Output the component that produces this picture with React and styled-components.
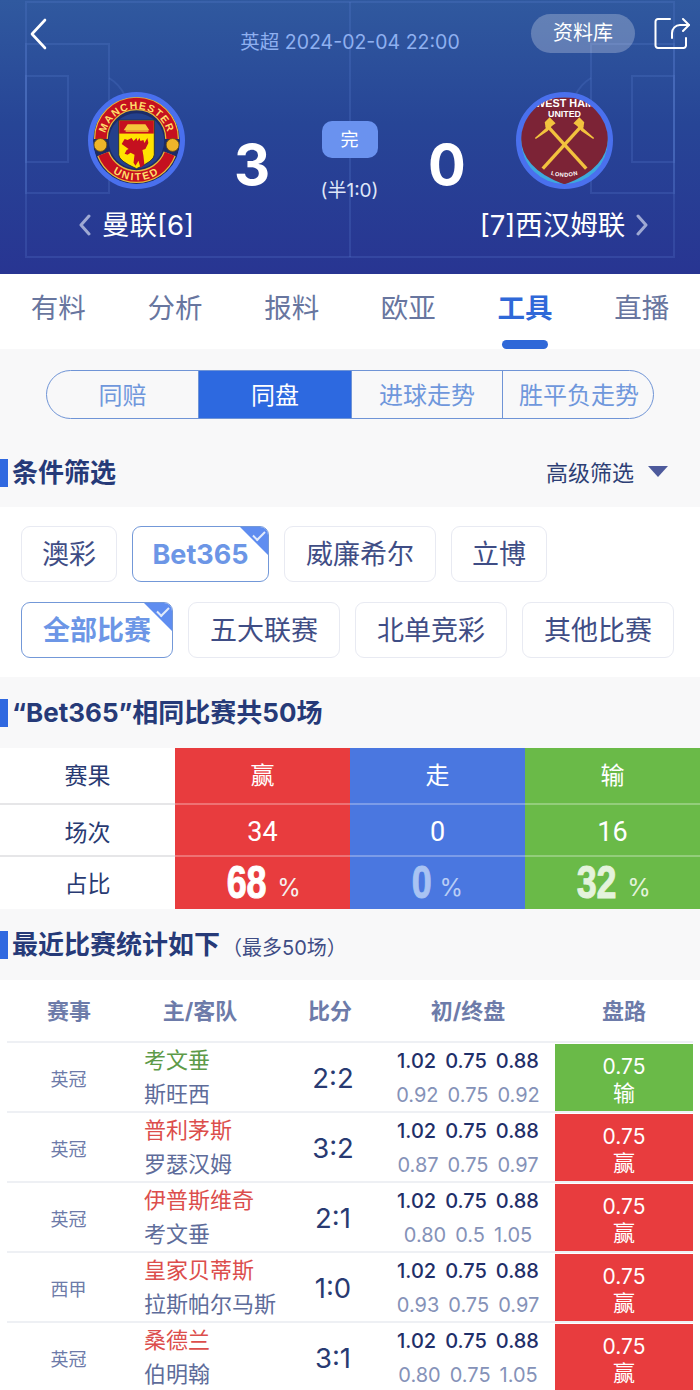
import styled, { createGlobalStyle } from "styled-components";

const rows = [
  { league: "英冠", home: "考文垂", away: "斯旺西", score: "2:2", end: ["0.92", "0.75", "0.92"], res: "输" },
  { league: "英冠", home: "普利茅斯", away: "罗瑟汉姆", score: "3:2", end: ["0.87", "0.75", "0.97"], res: "赢" },
  { league: "英冠", home: "伊普斯维奇", away: "考文垂", score: "2:1", end: ["0.80", "0.5", "1.05"], res: "赢" },
  { league: "西甲", home: "皇家贝蒂斯", away: "拉斯帕尔马斯", score: "1:0", end: ["0.93", "0.75", "0.97"], res: "赢" },
  { league: "英冠", home: "桑德兰", away: "伯明翰", score: "3:1", end: ["0.80", "0.75", "1.05"], res: "赢" },
];

const tabs = ["有料", "分析", "报料", "欧亚", "工具", "直播"];
const segs = [
  { label: "同赔", w: 151 },
  { label: "同盘", w: 153 },
  { label: "进球走势", w: 151 },
  { label: "胜平负走势", w: 153 },
];

function ManUtdCrest() {
  return (
    <svg width="88" height="88" viewBox="0 0 88 88">
      <circle cx="44" cy="44" r="44" fill="#1d2c66" />
      <circle cx="44" cy="44" r="28" fill="#24408c" />
      <path d="M8 42a36 36 0 0 1 72 0" fill="none" stroke="#e7b93a" strokeWidth="14" />
      <path d="M8 42a36 36 0 0 1 72 0" fill="none" stroke="#c5101f" strokeWidth="11.500" />
      <path d="M10.400 57a36 36 0 0 0 67.200 0" fill="none" stroke="#e7b93a" strokeWidth="13" />
      <path d="M10.400 57a36 36 0 0 0 67.200 0" fill="none" stroke="#c5101f" strokeWidth="10.500" />
      <defs>
        <path id="muTopText" d="M11.500 44a32.500 32.500 0 0 1 65 0" />
        <path id="muBottomText" d="M6.600 58a40 40 0 0 0 74.800 0" />
      </defs>
      <BadgeText fontSize="10.500" fontWeight="700" fill="#ffdf6b" letterSpacing="1.200">
        <textPath href="#muTopText" startOffset="50%" textAnchor="middle">MANCHESTER</textPath>
      </BadgeText>
      <BadgeText fontSize="10.500" fontWeight="700" fill="#ffdf6b" letterSpacing="2">
        <textPath href="#muBottomText" startOffset="50%" textAnchor="middle">UNITED</textPath>
      </BadgeText>
      <circle cx="7.500" cy="48" r="6.500" fill="#eeb52a" stroke="#6b4d0a" strokeWidth="0.800" />
      <circle cx="80.500" cy="48" r="6.500" fill="#eeb52a" stroke="#6b4d0a" strokeWidth="0.800" />
      <path d="M26 23H62V58Q62 64 44 72Q26 64 26 58Z" fill="#ffe300" stroke="#20202a" strokeWidth="0.800" />
      <rect x="26.500" y="23.500" width="35" height="13" fill="#c5101f" />
      <path d="M31 33l4-6h18l4 6z" fill="#f5c83a" />
      <path d="M33 34h23" stroke="#f5c83a" strokeWidth="1.500" />
      <path d="M29 47l3-5 3 1 4-2 2 3 3-3 1 3 2-3 1 3 3-1 1 3 3-5 1 5-3 6-3 1 1 6 1 9-4 3-2-7-3 5-2-3 1-8-4-2-3 2-3-1 2-4 2-1z" fill="#c5101f" />
    </svg>
  );
}

function WestHamCrest() {
  return (
    <svg width="88" height="88" viewBox="0 0 88 88">
      <circle cx="44" cy="44" r="44" fill="#3ea9dc" />
      <path d="M0 0H88V40Q88 72 44 88Q0 72 0 40Z" fill="#7c2336" />
      <g stroke="#f2c23e" strokeWidth="3.400">
        <path d="M22 72 62 28" />
        <path d="M66 72 26 28" />
      </g>
      <path d="M14 41 25 31l-1-6 5-5 6 6-4 3-4 5-12 8z" fill="#f2c23e" />
      <path d="M74 41 63 31l1-6-5-5-6 6 4 3 4 5 12 8z" fill="#f2c23e" />
      <defs>
        <path id="whLondon" d="M22 75Q44 85 66 75" />
      </defs>
      <BadgeText x="44" y="9.500" fontSize="11" fontWeight="700" fill="#fff" textAnchor="middle">WEST HAM</BadgeText>
      <BadgeText x="44" y="20" fontSize="9" fontWeight="700" fill="#fff" textAnchor="middle">UNITED</BadgeText>
      <BadgeText fontSize="5.800" fontWeight="700" fill="#fff" letterSpacing="0.500">
        <textPath href="#whLondon" startOffset="50%" textAnchor="middle">LONDON</textPath>
      </BadgeText>
    </svg>
  );
}

export default function App() {
  return (
    <Page>
      <GlobalStyle />
      <Header>
        <Pitch viewBox="0 0 700 274" fill="none" stroke="#5f86d6" strokeOpacity="0.22" strokeWidth="2">
          <rect x="26" y="2" width="648" height="255" />
          <line x1="350" y1="2" x2="350" y2="257" />
          <rect x="26" y="44" width="83" height="149" />
          <rect x="26" y="76" width="42" height="86" />
          <path d="M109 78a40 40 0 0 1 16 18" />
          <rect x="591" y="44" width="83" height="149" />
          <rect x="632" y="76" width="42" height="86" />
          <path d="M591 78a40 40 0 0 0 -16 18" />
        </Pitch>
        <TopBar>
          <IconButton>
            <svg width="18" height="32" viewBox="0 0 18 32" fill="none" stroke="#fff" strokeWidth="2.600" strokeLinecap="round" strokeLinejoin="round">
              <path d="M15 2 2 16l13 14" />
            </svg>
          </IconButton>
          <MatchInfo>英超 2024-02-04 22:00</MatchInfo>
          <TopRight>
            <DataButton>资料库</DataButton>
            <svg width="36" height="34" viewBox="0 0 36 34" fill="none" stroke="#fff" strokeWidth="2" strokeLinecap="round" strokeLinejoin="round">
              <path d="M16 2H4A2.500 2.500 0 0 0 1.500 4.500v24A2.500 2.500 0 0 0 4 31h25.500A2.500 2.500 0 0 0 32 28.500V21" />
              <path d="M18 21v-5a8 8 0 0 1 8-8h9" />
              <path d="M29 2l6 6-6 6" />
            </svg>
          </TopRight>
        </TopBar>
        <ScoreRow>
          <Team>
            <Badge><ManUtdCrest /></Badge>
            <TeamName>
              <Arrow viewBox="0 0 14 22"><path d="M11 2 3 11l8 9" /></Arrow>
              曼联[6]
            </TeamName>
          </Team>
          <Score>3</Score>
          <Status>
            <StatusPill>完</StatusPill>
            <HalfScore>(半1:0)</HalfScore>
          </Status>
          <Score>0</Score>
          <Team $away>
            <Badge><WestHamCrest /></Badge>
            <TeamName>
              [7]西汉姆联
              <Arrow viewBox="0 0 14 22"><path d="M3 2l8 9-8 9" /></Arrow>
            </TeamName>
          </Team>
        </ScoreRow>
      </Header>

      <TabBar>
        {tabs.map((t) => (
          <Tab key={t} $active={t === "工具"}>{t}</Tab>
        ))}
      </TabBar>

      <SegmentWrap>
        <Segments>
          {segs.map((s) => (
            <Segment key={s.label} $active={s.label === "同盘"} $w={s.w}>{s.label}</Segment>
          ))}
        </Segments>
      </SegmentWrap>

      <FilterHead>
        <SectionTitle>条件筛选</SectionTitle>
        <Advanced>高级筛选<Caret /></Advanced>
      </FilterHead>

      <Filters>
        <ChipRow>
          <Chip $w={96}>澳彩</Chip>
          <Chip $w={137} $active>Bet365<Check /></Chip>
          <Chip $w={152}>威廉希尔</Chip>
          <Chip $w={96}>立博</Chip>
        </ChipRow>
        <ChipRow>
          <Chip $w={152} $active>全部比赛<Check /></Chip>
          <Chip $w={152}>五大联赛</Chip>
          <Chip $w={152}>北单竞彩</Chip>
          <Chip $w={152}>其他比赛</Chip>
        </ChipRow>
      </Filters>

      <SameHead>
        <SectionTitle>“Bet365”相同比赛共50场</SectionTitle>
      </SameHead>

      <Summary>
        <SummaryRow $pb={4}>
          <SummaryLabel>赛果</SummaryLabel>
          <SummaryCell $c="#e83c3e">赢</SummaryCell>
          <SummaryCell $c="#4a77e0">走</SummaryCell>
          <SummaryCell $c="#6aba48">输</SummaryCell>
        </SummaryRow>
        <SummaryRow $h={52} $line $pt={3}>
          <SummaryLabel>场次</SummaryLabel>
          <SummaryCell $c="#e83c3e"><Count>34</Count></SummaryCell>
          <SummaryCell $c="#4a77e0"><Count>0</Count></SummaryCell>
          <SummaryCell $c="#6aba48"><Count>16</Count></SummaryCell>
        </SummaryRow>
        <SummaryRow $h={54} $line>
          <SummaryLabel>占比</SummaryLabel>
          <SummaryCell $c="#e83c3e"><Percent>68</Percent><PercentSign>%</PercentSign></SummaryCell>
          <SummaryCell $c="#4a77e0"><Percent $tint="#a9c3f3">0</Percent><PercentSign $tint="#b9cdf5">%</PercentSign></SummaryCell>
          <SummaryCell $c="#6aba48"><Percent $tint="#e4f3dc">32</Percent><PercentSign $tint="#e4f3dc">%</PercentSign></SummaryCell>
        </SummaryRow>
      </Summary>

      <RecentHead>
        <SectionTitle>最近比赛统计如下</SectionTitle>
        <TitleNote>（最多50场）</TitleNote>
      </RecentHead>

      <Table>
        <HeadRow>
          <LeagueCol>赛事</LeagueCol>
          <TeamsHead>主/客队</TeamsHead>
          <ScoreHead>比分</ScoreHead>
          <OddsHead>初/终盘</OddsHead>
          <RoadHead>盘路</RoadHead>
        </HeadRow>
        {rows.map((r) => (
          <Row key={r.home}>
            <LeagueCell>{r.league}</LeagueCell>
            <TeamsCell>
              <HomeName $win={r.res === "赢"}>{r.home}</HomeName>
              <AwayName>{r.away}</AwayName>
            </TeamsCell>
            <ScoreCell>{r.score}</ScoreCell>
            <OddsCell>
              <OddsLine $start>
                <span>1.02</span><span>0.75</span><span>0.88</span>
              </OddsLine>
              <OddsLine>
                {r.end.map((v, i) => <span key={i}>{v}</span>)}
              </OddsLine>
            </OddsCell>
            <RoadCell $win={r.res === "赢"}>
              <span>0.75</span>
              <RoadResult>{r.res}</RoadResult>
            </RoadCell>
          </Row>
        ))}
      </Table>
    </Page>
  );
}

const LATIN = `Inter, "Noto Sans CJK SC", sans-serif`;

const GlobalStyle = createGlobalStyle`
  html, body {
    margin: 0;
    padding: 0;
    background: #fff;
  }
  * {
    box-sizing: border-box;
  }
`;

const Page = styled.div`
  width: 700px;
  height: 1390px;
  overflow: hidden;
  font-family: ${LATIN};
  color: #283a72;
`;

const Header = styled.div`
  position: relative;
  height: 274px;
  background: linear-gradient(180deg, #30599f 0%, #274596 45%, #283592 100%);
  padding: 14px 10px 0 26px;
`;

const Pitch = styled.svg`
  position: absolute;
  left: 0;
  top: 0;
  width: 700px;
  height: 274px;
`;

const TopBar = styled.div`
  position: relative;
  display: flex;
  align-items: center;
  height: 40px;
`;

const IconButton = styled.div`
  width: 18px;
  height: 32px;
  margin-top: -1px;
  margin-left: 4px;
`;

const MatchInfo = styled.div`
  position: absolute;
  left: 0;
  right: 0;
  top: 14px;
  padding-right: 16px;
  text-align: center;
  font-size: 19.500px;
  line-height: 28px;
  color: #8fb0f0;
`;

const TopRight = styled.div`
  margin-left: auto;
  display: flex;
  align-items: center;
  gap: 19px;
  margin-top: -1px;
`;

const DataButton = styled.div`
  width: 104px;
  height: 39px;
  border-radius: 20px;
  background: rgba(255, 255, 255, 0.25);
  color: #fff;
  font-size: 20px;
  line-height: 39px;
  text-align: center;
`;

const ScoreRow = styled.div`
  position: relative;
  display: flex;
  margin: 38px 0 0 -26px;
  width: 700px;
`;

const Team = styled.div`
  flex: 0 0 ${(p) => (p.$away ? 228 : 227)}px;
  display: flex;
  flex-direction: column;
  align-items: center;
  padding: ${(p) => (p.$away ? "0 43px 0 0" : "0 0 0 45px")};
`;

const Badge = styled.div`
  width: 97px;
  height: 97px;
  border-radius: 50%;
  border: 5px solid #4a70ee;
  overflow: hidden;
  background: #4a70ee;
  display: flex;
  align-items: center;
  justify-content: center;
  flex: none;
`;

const BadgeText = styled.text`
  font-family: "Liberation Sans", sans-serif;
`;

const TeamName = styled.div`
  display: flex;
  align-items: center;
  gap: 10px;
  margin-top: 17px;
  font-size: 27.500px;
  line-height: 38px;
  color: #fff;
  white-space: nowrap;
`;

const Arrow = styled.svg`
  width: 14px;
  height: 22px;
  fill: none;
  stroke: #9fa9d3;
  stroke-width: 3;
  stroke-linecap: round;
  stroke-linejoin: round;
`;

const Score = styled.div`
  flex: 0 0 50px;
  margin-top: 38px;
  text-align: center;
  font-size: 56px;
  font-weight: 700;
  line-height: 70px;
  color: #fff;
`;

const Status = styled.div`
  flex: 1;
  display: flex;
  flex-direction: column;
  align-items: center;
`;

const StatusPill = styled.div`
  margin-top: 29px;
  width: 56px;
  height: 37px;
  border-radius: 10px;
  background: #6a92ef;
  color: #fff;
  font-size: 18px;
  line-height: 37px;
  text-align: center;
`;

const HalfScore = styled.div`
  margin-top: 20px;
  font-size: 19px;
  line-height: 26px;
  color: #dfe6f8;
  white-space: nowrap;
`;

const TabBar = styled.div`
  display: flex;
  height: 75px;
  background: #fff;
`;

const Tab = styled.div`
  position: relative;
  flex: 1;
  text-align: center;
  padding-top: 15px;
  font-size: 27.500px;
  line-height: 38px;
  font-weight: ${(p) => (p.$active ? 700 : 400)};
  color: ${(p) => (p.$active ? "#2f68d8" : "#68769f")};
  &::after {
    content: "";
    display: ${(p) => (p.$active ? "block" : "none")};
    position: absolute;
    left: 50%;
    bottom: 0;
    margin-left: -23px;
    width: 46px;
    height: 9px;
    border-radius: 5px;
    background: #2f68d8;
  }
`;

const SegmentWrap = styled.div`
  height: 90px;
  padding: 21px 46px 0;
  background: #f8f8f9;
`;

const Segments = styled.div`
  display: flex;
  width: 608px;
  height: 49px;
  border: 1.500px solid #6f94d6;
  border-radius: 25px;
  overflow: hidden;
  background: #f8f8f9;
`;

const Segment = styled.div`
  flex: 0 0 ${(p) => p.$w}px;
  border-left: 1.500px solid #6f94d6;
  text-align: center;
  font-size: 24px;
  line-height: 49px;
  white-space: nowrap;
  color: ${(p) => (p.$active ? "#fff" : "#6f97dc")};
  background: ${(p) => (p.$active ? "#2d69e0" : "transparent")};
  &:first-child {
    border-left: none;
  }
`;

const FilterHead = styled.div`
  display: flex;
  align-items: center;
  justify-content: space-between;
  height: 68px;
  padding: 0 32px 0 0;
  background: #f8f8f9;
`;

const SectionTitle = styled.div`
  border-left: 8px solid #2f68e0;
  height: 28px;
  padding-left: 4px;
  font-size: 26px;
  line-height: 28px;
  font-weight: 700;
  color: #263a78;
  white-space: nowrap;
`;

const Advanced = styled.div`
  display: flex;
  align-items: center;
  gap: 14px;
  padding-bottom: 5px;
  font-size: 22px;
  color: #2d3f75;
`;

const Caret = styled.span`
  width: 0;
  height: 0;
  margin-top: 1px;
  border-left: 10px solid transparent;
  border-right: 10px solid transparent;
  border-top: 11px solid #4d5a9c;
`;

const Filters = styled.div`
  height: 170px;
  padding: 19px 0 0 21px;
  background: #fff;
  display: flex;
  flex-direction: column;
  gap: 20px;
`;

const ChipRow = styled.div`
  display: flex;
  gap: 15px;
`;

const Chip = styled.div`
  position: relative;
  flex: 0 0 ${(p) => p.$w}px;
  height: 56px;
  border-radius: 9px;
  overflow: hidden;
  border: 1.500px solid ${(p) => (p.$active ? "#7398d8" : "#e8eaf2")};
  text-align: center;
  font-size: 27px;
  line-height: 55px;
  font-weight: ${(p) => (p.$active ? 700 : 400)};
  color: ${(p) => (p.$active ? "#6c96e6" : "#3f4d85")};
`;

const Check = styled.span`
  position: absolute;
  top: -1px;
  right: -1px;
  width: 0;
  height: 0;
  border-style: solid;
  border-width: 0 30px 30px 0;
  border-color: transparent #5f8df0 transparent transparent;
  &::after {
    content: "";
    position: absolute;
    left: 14px;
    top: 5px;
    width: 10px;
    height: 5px;
    border-left: 2.500px solid #e2ebfb;
    border-bottom: 2.500px solid #e2ebfb;
    transform: rotate(-45deg);
  }
`;

const SameHead = styled.div`
  display: flex;
  align-items: center;
  height: 71px;
  background: #f8f8f9;
`;

const Summary = styled.div`
  background: #fff;
`;

const SummaryRow = styled.div`
  display: flex;
  height: ${(p) => p.$h || 55}px;
  & > * {
    padding-top: ${(p) => p.$pt || 0}px;
    padding-bottom: ${(p) => p.$pb || 0}px;
    box-shadow: ${(p) => (p.$line ? "inset 0 2px 0 rgba(255, 255, 255, 0.28)" : "none")};
  }
  & > :first-child {
    box-shadow: ${(p) => (p.$line ? "inset 0 2px 0 #e6e6e8" : "none")};
  }
`;

const SummaryLabel = styled.div`
  flex: 0 0 175px;
  display: flex;
  align-items: center;
  justify-content: center;
  font-size: 23px;
  color: #283a72;
`;

const SummaryCell = styled.div`
  flex: 0 0 175px;
  display: flex;
  align-items: center;
  justify-content: center;
  gap: 10px;
  background: ${(p) => p.$c};
  color: #fff;
  font-size: 24px;
`;

const Count = styled.span`
  font-family: Roboto, sans-serif;
  font-size: 27px;
  margin-top: 2px;
`;

const Percent = styled.span`
  font-family: "Liberation Sans", sans-serif;
  font-size: 46px;
  font-weight: 700;
  line-height: 50px;
  display: inline-block;
  transform: scaleX(0.78);
  margin: 0 -5px 0 -3px;
  -webkit-text-stroke: 1px ${(p) => p.$tint || "#fff"};
  color: ${(p) => p.$tint || "#fff"};
`;

const PercentSign = styled.span`
  margin-top: 10px;
  font-size: 24px;
  color: ${(p) => p.$tint || "#f6f1ee"};
`;

const RecentHead = styled.div`
  display: flex;
  align-items: center;
  height: 71px;
  background: #f8f8f9;
`;

const TitleNote = styled.div`
  font-size: 20px;
  color: #3f4d85;
  margin-left: 2px;
  margin-top: 4px;
`;

const Table = styled.div`
  background: #fff;
  padding: 0 7px;
`;

const HeadRow = styled.div`
  display: flex;
  align-items: center;
  height: 63px;
  padding-bottom: 3px;
  border-bottom: 2px solid #eef0f4;
  font-size: 22px;
  font-weight: 700;
  color: #6d7ba9;
`;

const LeagueCol = styled.div`
  flex: 0 0 124px;
  text-align: center;
`;

const TeamsHead = styled.div`
  flex: 0 0 138px;
  text-align: center;
`;

const ScoreHead = styled.div`
  flex: 0 0 122px;
  text-align: center;
`;

const OddsHead = styled.div`
  flex: 0 0 154px;
  text-align: center;
`;

const RoadHead = styled.div`
  flex: 0 0 138px;
  margin-left: 10px;
  text-align: center;
`;

const Row = styled.div`
  display: flex;
  align-items: stretch;
  height: 70px;
  border-bottom: 2px solid #eef0f4;
`;

const LeagueCell = styled.div`
  flex: 0 0 123px;
  display: flex;
  align-items: center;
  justify-content: center;
  padding-top: 2px;
  font-size: 18px;
  color: #6d7ba9;
`;

const TeamsCell = styled.div`
  flex: 0 0 160px;
  padding: 0 0 0 14px;
  display: flex;
  flex-direction: column;
  justify-content: center;
  gap: 4px;
  white-space: nowrap;
  font-size: 22px;
  line-height: 30px;
`;

const HomeName = styled.div`
  color: ${(p) => (p.$win ? "#dc4e4c" : "#5d9a48")};
`;

const AwayName = styled.div`
  color: #5e6c9a;
`;

const ScoreCell = styled.div`
  flex: 0 0 86px;
  display: flex;
  align-items: center;
  justify-content: center;
  padding-top: 2px;
  font-size: 27.500px;
  color: #283a72;
`;

const OddsCell = styled.div`
  flex: 0 0 179px;
  display: flex;
  flex-direction: column;
  align-items: center;
  justify-content: center;
  gap: 4px;
  padding: 2px 0 0 5px;
`;

const OddsLine = styled.div`
  display: flex;
  justify-content: center;
  gap: 9px;
  width: 142px;
  font-size: 20px;
  line-height: 30px;
  font-weight: ${(p) => (p.$start ? 500 : 400)};
  color: ${(p) => (p.$start ? "#1f2f69" : "#8592b8")};
`;

const RoadCell = styled.div`
  flex: 0 0 138px;
  margin: 1px 0 0;
  padding-top: 5px;
  display: flex;
  flex-direction: column;
  align-items: center;
  justify-content: center;
  background: ${(p) => (p.$win ? "#e83c3e" : "#6aba48")};
  color: #fff;
  font-size: 21px;
  line-height: 26px;
`;

const RoadResult = styled.span`
  font-size: 22px;
`;
